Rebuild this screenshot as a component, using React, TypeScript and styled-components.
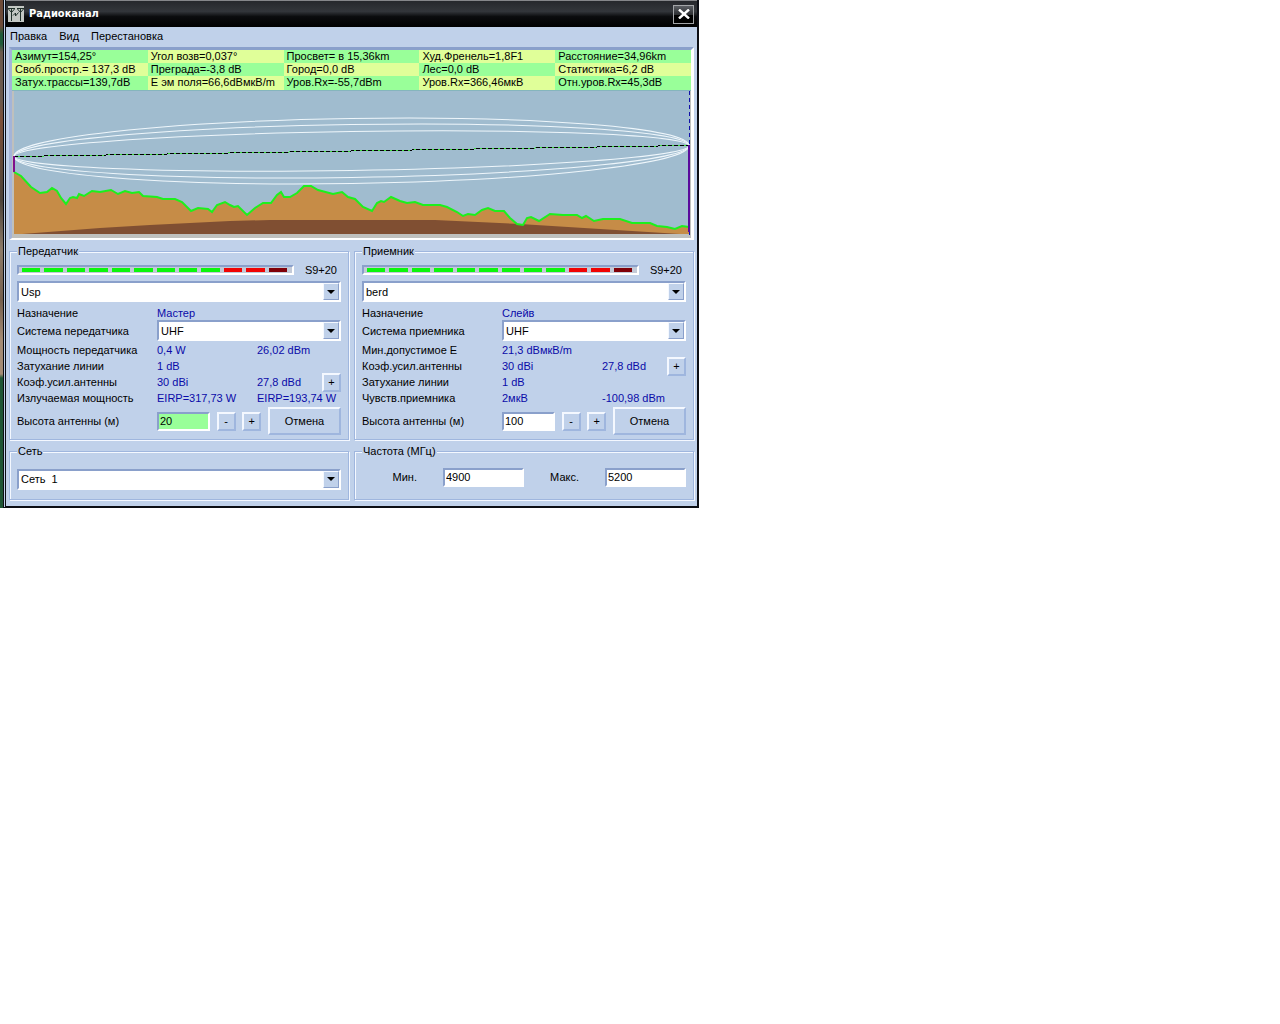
import React, { useId } from "react";
import styled, { createGlobalStyle } from "styled-components";

const c = {
  face: "#c0d1ea",
  light: "#f4f8ff",
  shadow: "#8aa0cb",
  line: "#9fb6de",
  value: "#0a0aa8",
  green: "#99ff99",
  yellow: "#e0ff99",
};

const GlobalStyle = createGlobalStyle`
  *, *::before, *::after { box-sizing: border-box; }
  body { margin: 0; background: #fff; }
  body, button, input, select {
    font-family: "Liberation Sans", Arial, sans-serif;
    font-size: 11px;
    line-height: 14px;
    color: #000;
  }
`;

const Desktop = styled.div`
  display: flex;
  max-width: 699px;
`;

const Wallpaper = styled.div`
  flex: 0 0 3px;
  background: linear-gradient(#6d4a38 0 26px, #1f5a38 34px 44px, #6b5a4c 52px 100px, #7d5038 120px, #4d443a 200px, #8d7b68 250px, #76604d 300px, #a58c74 340px 374px, #1f5534 378px 100%);
`;

const Window = styled.main`
  flex: 1;
  min-width: 0;
  background: ${c.face};
  border: solid #0c0e14;
  border-width: 0 2px 2px 0;
  border-left: 3px double #0c0e14;
`;

const TitleBar = styled.header`
  display: flex;
  align-items: center;
  gap: 5px;
  height: 27px;
  padding: 0 3px 0 2px;
  border-top: 1px solid #85868a;
  background: linear-gradient(#26282c, #33363b 40%, #0b0c0e 60%, #000);
`;

const Title = styled.h1`
  flex: 1;
  margin: 0;
  font: bold 11px/14px "DejaVu Sans Condensed", "DejaVu Sans", sans-serif;
  color: #fff;
`;

const CloseButton = styled.button`
  display: grid;
  place-items: center;
  width: 21px;
  height: 19px;
  padding: 0;
  border: 1px solid #a3a5a8;
  background: linear-gradient(#5c5f64, #2c2e32 50%, #000 51%);
`;

const MenuBar = styled.nav`
  display: flex;
  align-items: flex-start;
  gap: 12px;
  height: 20px;
  padding: 2px 4px 0;
`;

const MenuItem = styled.button`
  padding: 0;
  border: 0;
  background: none;
`;

const Body = styled.div`
  display: flex;
  flex-direction: column;
  gap: 4px;
  padding: 0 3px 6px;
`;

const Profile = styled.section`
  border: solid;
  border-width: 3px 3px 2px 3px;
  border-color: ${c.shadow} #fff #fff #a4b4d8;
`;

const Readings = styled.div`
  display: grid;
  grid-template-columns: repeat(5, 1fr);
  grid-template-rows: 13px 13px 14px;
`;

const Reading = styled.div<{ $yellow: boolean }>`
  padding-left: 3px;
  line-height: 13px;
  white-space: nowrap;
  overflow: hidden;
  background: ${(p) => (p.$yellow ? c.yellow : c.green)};
`;

const Chart = styled.svg`
  display: block;
  width: 100%;
  height: 148px;
`;

const Columns = styled.div`
  display: grid;
  grid-template-columns: 1fr 1fr;
  gap: 4px 5px;
`;

const Group = styled.fieldset<{ $top: number; $bottom: number }>`
  min-width: 0;
  margin: 0;
  padding: ${(p) => p.$top}px 7px ${(p) => p.$bottom}px;
  border: 1px solid ${c.line};
  box-shadow: inset 1px 1px 0 ${c.light}, 1px 1px 0 ${c.light};
`;

const Legend = styled.legend`
  height: 14px;
  padding: 0 1px;
  background: ${c.face};
`;

const Row = styled.div<{ $h: number }>`
  display: flex;
  align-items: center;
  height: ${(p) => p.$h}px;
  white-space: nowrap;
`;

const Label = styled.label`
  flex: 0 0 140px;
`;

const Caption = styled.span`
  flex: 0 0 140px;
`;

const Value = styled.span`
  flex: 0 0 100px;
  color: ${c.value};
`;

const SecondValue = styled.span`
  flex: 1;
  color: ${c.value};
`;

const Meter = styled.div`
  display: flex;
  flex: 0 0 277px;
  align-items: center;
  gap: 4px;
  height: 10px;
  padding: 0 5px 0 3px;
  border: 2px solid;
  border-color: ${c.shadow} #fff #fff ${c.shadow};
  background: #c3cad8;
`;

const Segment = styled.i<{ $color: string }>`
  flex: 1;
  height: 4px;
  background: ${(p) => p.$color};
`;

const MeterText = styled.output`
  flex: 1;
  padding-right: 4px;
  text-align: right;
`;

const ComboBox = styled.span`
  position: relative;
  flex: 1;
  display: flex;
  height: 21px;
`;

const Select = styled.select`
  appearance: none;
  width: 100%;
  padding: 0 20px 0 2px;
  border: 2px solid;
  border-color: ${c.shadow} #fff #fff ${c.shadow};
  border-radius: 0;
  background: #fff;
`;

const Arrow = styled.span`
  position: absolute;
  top: 2px;
  right: 2px;
  display: grid;
  place-items: center;
  width: 16px;
  height: 17px;
  border: 1px solid;
  border-color: ${c.light} ${c.shadow} ${c.shadow} ${c.light};
  background: ${c.face};
  pointer-events: none;
`;

const Field = styled.input<{ $w: number; $green?: boolean }>`
  flex: 0 0 ${(p) => p.$w}px;
  width: ${(p) => p.$w}px;
  height: 19px;
  padding: 0 1px;
  border: 2px solid;
  border-color: ${c.shadow} #fff #fff ${c.shadow};
  border-radius: 0;
  background: ${(p) => (p.$green ? c.green : "#fff")};
`;

const PushButton = styled.button<{ $wide?: boolean }>`
  flex: 0 0 auto;
  width: ${(p) => (p.$wide ? 73 : 19)}px;
  height: ${(p) => (p.$wide ? 28 : 19)}px;
  padding: 0;
  border: 2px solid;
  border-color: ${c.light} ${c.line} ${c.line} ${c.light};
  background: ${c.face};
`;

const HeightControls = styled.div`
  display: flex;
  flex: 1;
  align-items: center;
  justify-content: space-between;
`;

const FrequencyLabel = styled.label<{ $w: number }>`
  flex: 0 0 ${(p) => p.$w}px;
  padding-right: 26px;
  text-align: right;
`;

const readings = [
  "Азимут=154,25°", "Угол возв=0,037°", "Просвет= в 15,36km", "Худ.Френель=1,8F1", "Расстояние=34,96km",
  "Своб.простр.= 137,3 dB", "Преграда=-3,8 dB", "Город=0,0 dB", "Лес=0,0 dB", "Статистика=6,2 dB",
  "Затух.трассы=139,7dB", "Е эм поля=66,6dBмкВ/m", "Уров.Rx=-55,7dBm", "Уров.Rx=366,46мкВ", "Отн.уров.Rx=45,3dB",
];

const terrain =
  "14,172 21,176 31,187 40,193 47,192 52,188 57,191 61,198 66,204 70,198 73,197 77,198 79,194 84,196 92,191 100,192 111,190 118,194 125,191 132,193 139,192 143,196 157,197 163,199 175,199 182,202 191,211 198,208 208,209 212,212 217,205 225,202 230,205 234,207 238,206 247,215 255,208 263,203 271,203 277,195 281,192 284,197 290,197 297,193 304,186 311,186 318,190 333,194 342,192 348,197 355,199 363,207 372,211 377,203 381,201 384,202 391,197 400,201 407,203 415,202 423,205 440,205 447,207 457,212 463,216 468,214 475,215 482,210 488,208 495,211 504,211 510,218 517,224 523,225 527,218 531,217 539,221 550,214 563,215 577,215 582,218 586,216 594,221 603,219 620,219 632,223 650,223 657,226 667,227 675,229 682,226 689,227";

function ProfileChart() {
  return (
    <Chart viewBox="12 90 679 148" preserveAspectRatio="none" role="img" aria-label="Профиль трассы">
      <rect x="12" y="90" width="679" height="148" fill="#bfc0bd" />
      <rect x="14" y="90" width="676" height="144" fill="#a0bccf" />
      <path d="M12 90.5H691" stroke="#85b5bd" />
      <polygon points={`14,234 ${terrain} 689,234`} fill="#c68c47" />
      <polygon points="22,234 100,228 150,225 230,221 270,220 435,220 520,224 600,229 680,234" fill="#804f32" />
      <polyline points={terrain} fill="none" stroke="#1df01d" strokeWidth="2" />
      <g fill="none" stroke="#eef6fb" transform="rotate(-0.9 351.5 151)">
        <ellipse cx="351.5" cy="151" rx="337.5" ry="32.5" />
        <ellipse cx="351.5" cy="151" rx="337.5" ry="26.5" />
        <ellipse cx="351.5" cy="151" rx="337.5" ry="19.5" />
      </g>
      <g shapeRendering="crispEdges">
        <path d="M14 156.5L689 145.5" stroke="#3fe03f" />
        <path d="M14 156.5L689 145.5" stroke="#000" strokeDasharray="4 2" />
        <path d="M689.5 91V238" stroke="#1010a8" strokeDasharray="4 3" />
        <path d="M14 156V172" stroke="#80108c" strokeWidth="2" />
        <path d="M689 145V232" stroke="#5a0a9c" strokeWidth="2" />
      </g>
    </Chart>
  );
}

function Combo({ id, value, label }: { id: string; value: string; label?: string }) {
  return (
    <ComboBox>
      <Select id={id} aria-label={label} defaultValue={value}>
        <option value={value}>{value}</option>
      </Select>
      <Arrow>
        <svg width="8" height="4" viewBox="0 0 8 4"><path d="M0 0H8L4 4Z" /></svg>
      </Arrow>
    </ComboBox>
  );
}

type Detail = { name: string; first: string; second?: string; button?: boolean };

type StationProps = {
  title: string;
  site: string;
  role: string;
  systemLabel: string;
  details: Detail[];
  height: string;
  highlight?: boolean;
};

function Station({ title, site, role, systemLabel, details, height, highlight }: StationProps) {
  const id = useId();
  return (
    <Group $top={4} $bottom={3}>
      <Legend>{title}</Legend>
      <Row $h={15}>
        <Meter role="img" aria-label="S9+20">
          {Array.from({ length: 12 }, (_, i) => (
            <Segment key={i} $color={i < 9 ? "#0cf60c" : i < 11 ? "#f00404" : "#800008"} />
          ))}
        </Meter>
        <MeterText>S9+20</MeterText>
      </Row>
      <Row $h={29}>
        <Combo id={`${id}-site`} value={site} label={title} />
      </Row>
      <Row $h={13}>
        <Caption>Назначение</Caption>
        <Value>{role}</Value>
      </Row>
      <Row $h={23}>
        <Label htmlFor={`${id}-system`}>{systemLabel}</Label>
        <Combo id={`${id}-system`} value="UHF" />
      </Row>
      {details.map((d) => (
        <Row $h={16} key={d.name}>
          <Caption>{d.name}</Caption>
          <Value>{d.first}</Value>
          <SecondValue>{d.second}</SecondValue>
          {d.button && <PushButton aria-label={d.name}>+</PushButton>}
        </Row>
      ))}
      <Row $h={30}>
        <Label htmlFor={`${id}-height`}>Высота антенны (м)</Label>
        <HeightControls>
          <Field id={`${id}-height`} $w={53} $green={highlight} defaultValue={height} />
          <PushButton>-</PushButton>
          <PushButton>+</PushButton>
          <PushButton $wide>Отмена</PushButton>
        </HeightControls>
      </Row>
    </Group>
  );
}

export default function App() {
  return (
    <>
      <GlobalStyle />
      <Desktop>
        <Wallpaper />
        <Window>
          <TitleBar>
            <svg width="16" height="16" viewBox="0 0 16 16">
              <rect width="16" height="16" fill="#c3c7c3" />
              <path d="M0 2.5H7M9 2.5H16M3.5 2V15M12.5 2V15M0.5 3L3.5 6.5L6.5 3M9.5 3L12.5 6.5L15.5 3M5 9.5L7.5 7V10L10.5 6.5" fill="none" stroke="#20302a" />
            </svg>
            <Title>Радиоканал</Title>
            <CloseButton aria-label="Закрыть">
              <svg width="12" height="10" viewBox="0 0 12 10"><path d="M1 0.5L11 9.5M11 0.5L1 9.5" stroke="#fff" strokeWidth="2.4" /></svg>
            </CloseButton>
          </TitleBar>
          <MenuBar>
            <MenuItem>Правка</MenuItem>
            <MenuItem>Вид</MenuItem>
            <MenuItem>Перестановка</MenuItem>
          </MenuBar>
          <Body>
            <Profile>
              <Readings>
                {readings.map((text, i) => (
                  <Reading key={text} $yellow={i % 2 === 1}>{text}</Reading>
                ))}
              </Readings>
              <ProfileChart />
            </Profile>
            <Columns>
              <Station
                title="Передатчик"
                site="Usp"
                role="Мастер"
                systemLabel="Система передатчика"
                height="20"
                highlight
                details={[
                  { name: "Мощность передатчика", first: "0,4 W", second: "26,02 dBm" },
                  { name: "Затухание линии", first: "1 dB" },
                  { name: "Коэф.усил.антенны", first: "30 dBi", second: "27,8 dBd", button: true },
                  { name: "Излучаемая мощность", first: "EIRP=317,73 W", second: "EIRP=193,74 W" },
                ]}
              />
              <Station
                title="Приемник"
                site="berd"
                role="Слейв"
                systemLabel="Система приемника"
                height="100"
                details={[
                  { name: "Мин.допустимое Е", first: "21,3 dBмкВ/m" },
                  { name: "Коэф.усил.антенны", first: "30 dBi", second: "27,8 dBd", button: true },
                  { name: "Затухание линии", first: "1 dB" },
                  { name: "Чувств.приемника", first: "2мкВ", second: "-100,98 dBm" },
                ]}
              />
              <Group $top={7} $bottom={6}>
                <Legend>Сеть</Legend>
                <Row $h={28}>
                  <Combo id="network" value={"Сеть\u00a0 1"} label="Сеть" />
                </Row>
              </Group>
              <Group $top={7} $bottom={6}>
                <Legend>Частота (МГц)</Legend>
                <Row $h={24}>
                  <FrequencyLabel htmlFor="fmin" $w={81}>Мин.</FrequencyLabel>
                  <Field id="fmin" $w={81} defaultValue="4900" />
                  <FrequencyLabel htmlFor="fmax" $w={81}>Макс.</FrequencyLabel>
                  <Field id="fmax" $w={81} defaultValue="5200" />
                </Row>
              </Group>
            </Columns>
          </Body>
        </Window>
      </Desktop>
    </>
  );
}
